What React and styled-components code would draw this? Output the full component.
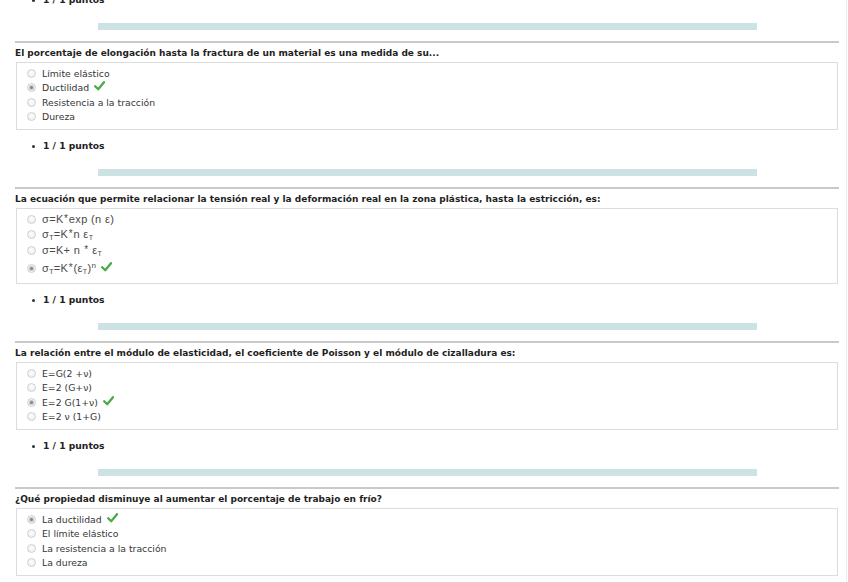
import React from "react";
import styled, { createGlobalStyle } from "styled-components";

const Global = createGlobalStyle`
  html, body { margin: 0; padding: 0; background: #fff; }
  body { overflow: hidden; }
`;

const Page = styled.div`
  width: 847px;
  height: 582px;
  overflow: hidden;
  border-right: 1px solid #ececec;
  box-sizing: border-box;
  font-family: "DejaVu Sans", Verdana, sans-serif;
`;

const Column = styled.div`
  width: 824px;
  margin: -7px 0 0 15px;
  display: flex;
  flex-direction: column;
`;

const Points = styled.ul`
  list-style: none;
  margin: ${(p) => (p.$first ? "0" : "9px")} 0 0;
  padding: 0 0 0 17px;
  height: 14px;
  line-height: 14px;
  font-size: 9.2px;
  font-weight: bold;
  color: #222;
  li {
    display: flex;
    align-items: center;
  }
  li::before {
    content: "";
    width: 3px;
    height: 3px;
    border-radius: 50%;
    background: #333;
    margin-right: 8px;
  }
`;

const TealBar = styled.div`
  margin: 16px 0 0 83px;
  width: 659px;
  height: 7px;
  background: #cde3e3;
`;

const Rule = styled.div`
  margin-top: 11px;
  height: 2px;
  background: #c9c9c9;
`;

const Title = styled.div`
  margin-top: 3px;
  height: 14px;
  line-height: 14px;
  font-size: 9px;
  font-weight: bold;
  color: #1e1e1e;
  white-space: nowrap;
`;

const Box = styled.div`
  margin: 2px 0 0 1px;
  width: 822px;
  box-sizing: border-box;
  border: 1px solid #dcdcdc;
  padding: 3px 0 5px 10px;
  display: flex;
  flex-direction: column;
`;

const Option = styled.label`
  display: flex;
  align-items: center;
  height: ${(p) => p.$h}px;
  font-size: 9.3px;
  color: #363636;
  white-space: nowrap;
`;

const Radio = styled.span`
  width: 9px;
  height: 9px;
  flex: none;
  box-sizing: border-box;
  border-radius: 50%;
  border: 1px solid #d0d0d0;
  background: radial-gradient(circle at 50% 40%, #fdfdfd 0%, #ebebeb 100%);
  margin-right: 6px;
  display: flex;
  align-items: center;
  justify-content: center;
  &::after {
    content: "";
    display: ${(p) => (p.$checked ? "block" : "none")};
    width: 3px;
    height: 3px;
    border-radius: 50%;
    background: #8a8a8a;
    box-shadow: 0 0 0 1px #c4c4c4;
  }
`;

const Formula = styled.span`
  font-family: "Liberation Sans", Arial, sans-serif;
  font-size: 11px;
  letter-spacing: 0.35px;
  color: #4a4a4a;
  sub {
    font-size: 7px;
    vertical-align: -2px;
  }
  sup {
    font-size: 8px;
    vertical-align: 4px;
  }
  .ast {
    font-size: 10px;
    vertical-align: 1px;
    margin: 0 0.5px;
  }
`;

const Check = styled.svg`
  margin-left: 5px;
  margin-top: -3px;
  flex: none;
`;

function CheckMark() {
  return (
    <Check width="11" height="10" viewBox="0 0 11 10">
      <path
        d="M1.2 5.2 L4.2 8.2 L10 1.2"
        fill="none"
        stroke="#4aa94a"
        strokeWidth="2.3"
        strokeLinecap="round"
        strokeLinejoin="round"
      />
    </Check>
  );
}

const questions = [
  {
    title:
      "El porcentaje de elongación hasta la fractura de un material es una medida de su...",
    options: [
      { text: "Límite elástico", h: 14.5 },
      { text: "Ductilidad", h: 14.5, correct: true },
      { text: "Resistencia a la tracción", h: 14.5 },
      { text: "Dureza", h: 14.5 },
    ],
  },
  {
    title:
      "La ecuación que permite relacionar la tensión real y la deformación real en la zona plástica, hasta la estricción, es:",
    options: [
      {
        h: 14,
        formula: (
          <>
            σ=K<span className="ast">*</span>exp (n ε)
          </>
        ),
      },
      {
        h: 16,
        formula: (
          <>
            σ<sub>T</sub>=K<span className="ast">*</span>n ε<sub>T</sub>
          </>
        ),
      },
      {
        h: 16,
        formula: (
          <>
            σ=K+ n <span className="ast">*</span> ε<sub>T</sub>
          </>
        ),
      },
      {
        h: 20,
        correct: true,
        formula: (
          <>
            σ<sub>T</sub>=K<span className="ast">*</span>(ε<sub>T</sub>)<sup>n</sup>
          </>
        ),
      },
    ],
  },
  {
    title:
      "La relación entre el módulo de elasticidad, el coeficiente de Poisson y el módulo de cizalladura es:",
    options: [
      { text: "E=G(2 +ν)", h: 14.5 },
      { text: "E=2 (G+ν)", h: 14.5 },
      { text: "E=2 G(1+ν)", h: 14.5, correct: true },
      { text: "E=2 ν (1+G)", h: 14.5 },
    ],
  },
  {
    title:
      "¿Qué propiedad disminuye al aumentar el porcentaje de trabajo en frío?",
    options: [
      { text: "La ductilidad", h: 14.5, correct: true },
      { text: "El límite elástico", h: 14.5 },
      { text: "La resistencia a la tracción", h: 14.5 },
      { text: "La dureza", h: 14.5 },
    ],
  },
];

function PointsLine({ first }) {
  return (
    <Points $first={first}>
      <li>1 / 1 puntos</li>
    </Points>
  );
}

function Question({ q }) {
  return (
    <>
      <Rule />
      <Title>{q.title}</Title>
      <Box>
        {q.options.map((o, i) => (
          <Option key={i} $h={o.h}>
            <Radio $checked={!!o.correct} />
            {o.formula ? <Formula>{o.formula}</Formula> : o.text}
            {o.correct && <CheckMark />}
          </Option>
        ))}
      </Box>
    </>
  );
}

export default function App() {
  return (
    <Page>
      <Global />
      <Column>
        <PointsLine first />
        <TealBar />
        {questions.map((q, i) => (
          <React.Fragment key={i}>
            <Question q={q} />
            {i < questions.length - 1 && (
              <>
                <PointsLine />
                <TealBar />
              </>
            )}
          </React.Fragment>
        ))}
      </Column>
    </Page>
  );
}
